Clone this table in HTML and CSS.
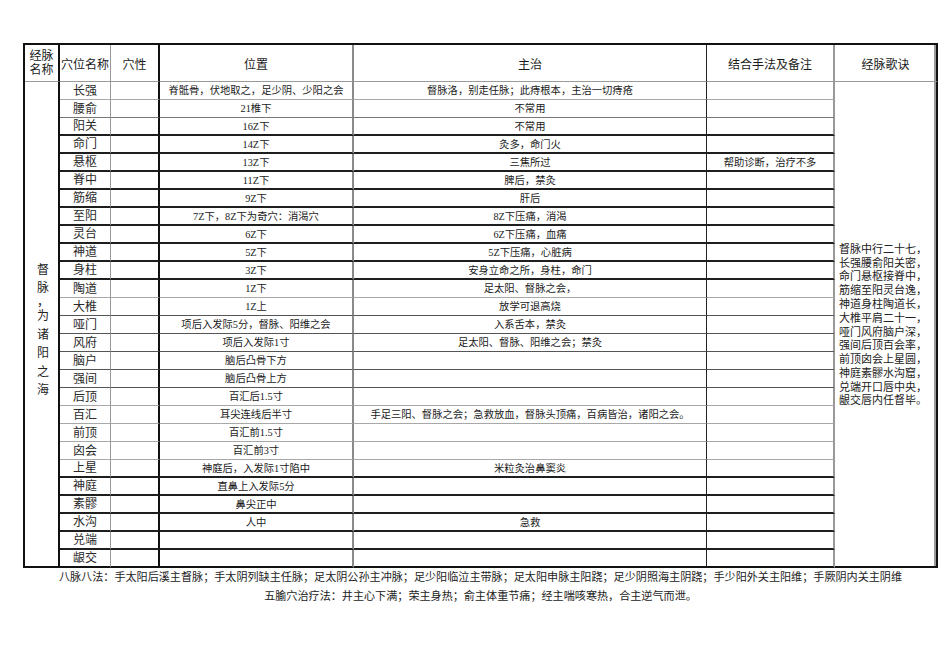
FILE: index.html
```html
<!DOCTYPE html>
<html lang="zh-CN">
<head>
<meta charset="utf-8">
<title>督脉</title>
<link rel="stylesheet" href="styles.css">
</head>
<body>
<div class="page">
  <div class="sheet">
    <div class="row head">
      <div class="c k1 hd two"><span>经脉</span><span>名称</span></div>
      <div class="c k2 hd">穴位名称</div>
      <div class="c k3 hd">穴性</div>
      <div class="c k4 hd">位置</div>
      <div class="c k5 hd">主治</div>
      <div class="c k6 hd">结合手法及备注</div>
      <div class="c k7 hd">经脉歌诀</div>
    </div>

    <div class="merge-left">
      <span>督</span><span>脉</span><span class="comma">，</span><span>为</span><span>诸</span><span>阳</span><span>之</span><span>海</span>
    </div>
    <div class="merge-right">
      <p>督脉中行二十七，</p>
      <p>长强腰俞阳关密，</p>
      <p>命门悬枢接脊中，</p>
      <p>筋缩至阳灵台逸，</p>
      <p>神道身柱陶道长，</p>
      <p>大椎平肩二十一，</p>
      <p>哑门风府脑户深，</p>
      <p>强间后顶百会率，</p>
      <p>前顶囟会上星圆，</p>
      <p>神庭素髎水沟窟，</p>
      <p>兑端开口唇中央，</p>
      <p>龈交唇内任督毕。</p>
    </div>

    <div class="row g1"><div class="c k2 nm">长强</div><div class="c k3"></div><div class="c k4 tx">脊骶骨，伏地取之，足少阴、少阳之会</div><div class="c k5 tx">督脉洛，别走任脉；此痔根本，主治一切痔疮</div><div class="c k6 tx"></div></div>
    <div class="row g2"><div class="c k2 nm">腰俞</div><div class="c k3"></div><div class="c k4 tx">21椎下</div><div class="c k5 tx">不常用</div><div class="c k6 tx"></div></div>
    <div class="row bk"><div class="c k2 nm">阳关</div><div class="c k3"></div><div class="c k4 tx">16Z下</div><div class="c k5 tx">不常用</div><div class="c k6 tx"></div></div>
    <div class="row bk"><div class="c k2 nm">命门</div><div class="c k3"></div><div class="c k4 tx">14Z下</div><div class="c k5 tx">灸多，命门火</div><div class="c k6 tx"></div></div>
    <div class="row bk"><div class="c k2 nm">悬枢</div><div class="c k3"></div><div class="c k4 tx">13Z下</div><div class="c k5 tx">三焦所过</div><div class="c k6 tx">帮助诊断，治疗不多</div></div>
    <div class="row bk"><div class="c k2 nm">脊中</div><div class="c k3"></div><div class="c k4 tx">11Z下</div><div class="c k5 tx">脾后，禁灸</div><div class="c k6 tx"></div></div>
    <div class="row bk"><div class="c k2 nm">筋缩</div><div class="c k3"></div><div class="c k4 tx">9Z下</div><div class="c k5 tx">肝后</div><div class="c k6 tx"></div></div>
    <div class="row bk"><div class="c k2 nm">至阳</div><div class="c k3"></div><div class="c k4 tx">7Z下，8Z下为奇穴：消渴穴</div><div class="c k5 tx">8Z下压痛，消渴</div><div class="c k6 tx"></div></div>
    <div class="row bk"><div class="c k2 nm">灵台</div><div class="c k3"></div><div class="c k4 tx">6Z下</div><div class="c k5 tx">6Z下压痛，血痛</div><div class="c k6 tx"></div></div>
    <div class="row bk"><div class="c k2 nm">神道</div><div class="c k3"></div><div class="c k4 tx">5Z下</div><div class="c k5 tx">5Z下压痛，心脏病</div><div class="c k6 tx"></div></div>
    <div class="row bk"><div class="c k2 nm">身柱</div><div class="c k3"></div><div class="c k4 tx">3Z下</div><div class="c k5 tx">安身立命之所，身柱，命门</div><div class="c k6 tx"></div></div>
    <div class="row g1"><div class="c k2 nm">陶道</div><div class="c k3"></div><div class="c k4 tx">1Z下</div><div class="c k5 tx">足太阳、督脉之会，</div><div class="c k6 tx"></div></div>
    <div class="row g3"><div class="c k2 nm">大椎</div><div class="c k3"></div><div class="c k4 tx">1Z上</div><div class="c k5 tx">放学可退高烧</div><div class="c k6 tx"></div></div>
    <div class="row g3"><div class="c k2 nm">哑门</div><div class="c k3"></div><div class="c k4 tx">项后入发际5分，督脉、阳维之会</div><div class="c k5 tx">入系舌本，禁灸</div><div class="c k6 tx"></div></div>
    <div class="row g3"><div class="c k2 nm">风府</div><div class="c k3"></div><div class="c k4 tx">项后入发际1寸</div><div class="c k5 tx">足太阳、督脉、阳维之会；禁灸</div><div class="c k6 tx"></div></div>
    <div class="row g3"><div class="c k2 nm">脑户</div><div class="c k3"></div><div class="c k4 tx">脑后凸骨下方</div><div class="c k5 tx"></div><div class="c k6 tx"></div></div>
    <div class="row g3"><div class="c k2 nm">强间</div><div class="c k3"></div><div class="c k4 tx">脑后凸骨上方</div><div class="c k5 tx"></div><div class="c k6 tx"></div></div>
    <div class="row g1"><div class="c k2 nm">后顶</div><div class="c k3"></div><div class="c k4 tx">百汇后1.5寸</div><div class="c k5 tx"></div><div class="c k6 tx"></div></div>
    <div class="row g1"><div class="c k2 nm">百汇</div><div class="c k3"></div><div class="c k4 tx">耳尖连线后半寸</div><div class="c k5 tx">手足三阳、督脉之会；急救放血，督脉头顶痛，百病皆治，诸阳之会。</div><div class="c k6 tx"></div></div>
    <div class="row g1"><div class="c k2 nm">前顶</div><div class="c k3"></div><div class="c k4 tx">百汇前1.5寸</div><div class="c k5 tx"></div><div class="c k6 tx"></div></div>
    <div class="row g1"><div class="c k2 nm">囟会</div><div class="c k3"></div><div class="c k4 tx">百汇前3寸</div><div class="c k5 tx"></div><div class="c k6 tx"></div></div>
    <div class="row bk"><div class="c k2 nm">上星</div><div class="c k3"></div><div class="c k4 tx">神庭后，入发际1寸陷中</div><div class="c k5 tx">米粒灸治鼻窦炎</div><div class="c k6 tx"></div></div>
    <div class="row bk"><div class="c k2 nm">神庭</div><div class="c k3"></div><div class="c k4 tx">直鼻上入发际5分</div><div class="c k5 tx"></div><div class="c k6 tx"></div></div>
    <div class="row bk"><div class="c k2 nm">素髎</div><div class="c k3"></div><div class="c k4 tx">鼻尖正中</div><div class="c k5 tx"></div><div class="c k6 tx"></div></div>
    <div class="row bk"><div class="c k2 nm">水沟</div><div class="c k3"></div><div class="c k4 tx">人中</div><div class="c k5 tx">急救</div><div class="c k6 tx"></div></div>
    <div class="row bk"><div class="c k2 nm">兑端</div><div class="c k3"></div><div class="c k4 tx"></div><div class="c k5 tx"></div><div class="c k6 tx"></div></div>
    <div class="row last"><div class="c k2 nm">龈交</div><div class="c k3"></div><div class="c k4 tx"></div><div class="c k5 tx"></div><div class="c k6 tx"></div></div>
  </div>
  <div class="notes">
    <p>八脉八法：手太阳后溪主督脉；手太阴列缺主任脉；足太阴公孙主冲脉；足少阳临泣主带脉；足太阳申脉主阳跷；足少阴照海主阴跷；手少阳外关主阳维；手厥阴内关主阴维</p>
    <p>五腧穴治疗法：井主心下满；荣主身热；俞主体重节痛；经主喘咳寒热，合主逆气而泄。</p>
  </div>
</div>
</body>
</html>
```

FILE: styles.css
```css
* { box-sizing: border-box; }

html, body {
  margin: 0;
  padding: 0;
  background: #ffffff;
}

body {
  font-family: "Liberation Serif", "Noto Sans CJK SC", serif;
  color: #1a1a1a;
}

.page {
  padding: 43px 0 0 23px;
  width: 950px;
}

.sheet {
  display: grid;
  grid-template-columns: 35px 51px 49px 194px 353px 128px 103px;
  grid-template-rows: 37px repeat(27, 18px);
  width: 915px;
  border-left: 2px solid #111;
  border-top: 2px solid #111;
}

.row { display: contents; }

.c {
  display: flex;
  align-items: center;
  justify-content: center;
  white-space: nowrap;
  border-bottom: 1px solid #999;
  overflow: visible;
}

.k1 { border-right: 2px solid #111; }
.k2 { border-right: 1px solid #999; }
.k3 { border-right: 2px solid #111; }
.k4 { border-right: 2px solid #8a8a8a; }
.k5 { border-right: 1px solid #222; }
.k6 { border-right: 2px solid #999; }
.k7 { border-right: 2px solid #111; }

.hd {
  font-size: 12px;
  line-height: 14px;
  padding-top: 4px;
  border-bottom: 1px solid #9a9a9a;
}

.two {
  flex-direction: column;
  padding-top: 1px;
}

.two span {
  display: block;
  line-height: 13.8px;
}

.nm {
  font-size: 12px;
  line-height: 14px;
  color: #2a2a2a;
}

.tx {
  font-size: 10.3px;
  line-height: 12px;
  padding-top: 1px;
}

.g1 > .c { border-bottom: 1px solid #a8a8a8; }
.g2 > .c { border-bottom: 1px solid #777; }
.g3 > .c { border-bottom: 1px solid #555; }
.bk > .c { border-bottom: 2px solid #1e1e1e; }
.last > .c { border-bottom: 2px solid #111; }

.merge-left {
  grid-column: 1;
  grid-row: 2 / 29;
  border-right: 2px solid #111;
  border-bottom: 2px solid #111;
  display: flex;
  flex-direction: column;
  align-items: center;
  justify-content: center;
  padding: 12px 0 0 3px;
  font-size: 12px;
  color: #222;
}

.merge-left span {
  display: block;
  line-height: 18.5px;
  height: 18.5px;
}

.merge-left .comma {
  height: 14px;
  line-height: 14px;
  margin: -2.25px 0;
}

.merge-right {
  grid-column: 7;
  grid-row: 2 / 29;
  border-right: 2px solid #111;
  border-bottom: 2px solid #111;
  box-shadow: inset -2px 0 0 #9a9a9a;
  display: flex;
  flex-direction: column;
  justify-content: center;
  padding: 3px 0 0 4px;
  font-size: 11px;
  color: #222;
}

.merge-right p {
  margin: 0;
  line-height: 13.8px;
  white-space: nowrap;
}

.head > .k7 {
  box-shadow: inset -2px 0 0 #9a9a9a;
}

.notes {
  width: 915px;
  text-align: center;
  font-size: 11.1px;
  color: #222;
}

.notes p {
  margin: 0;
  line-height: 19px;
  white-space: nowrap;
}
```
